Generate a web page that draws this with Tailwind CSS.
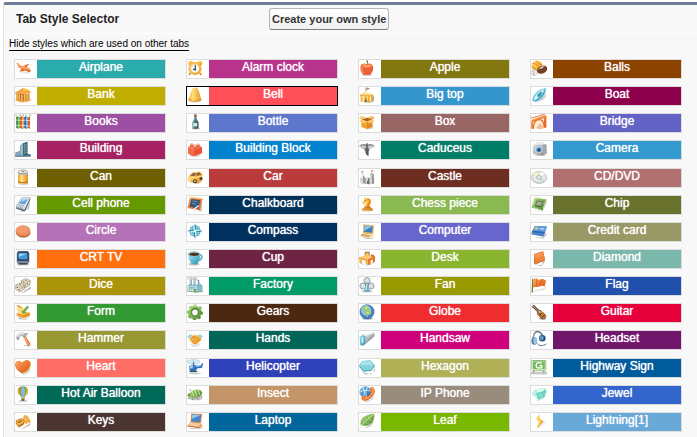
<!DOCTYPE html>
<html lang="en">
<head>
<meta charset="utf-8">
<title>Tab Style Selector</title>
<script src="https://cdn.jsdelivr.net/npm/@tailwindcss/browser@4"></script>
</head>
<body class="bg-white font-['Liberation_Sans',Arial,sans-serif] text-xs text-black">
<svg width="0" height="0" class="absolute" aria-hidden="true">
  <defs>
    <linearGradient id="o" x1="0" y1="0" x2="1" y2="1"><stop offset="0" stop-color="#fbb070"/><stop offset=".5" stop-color="#ee7c36"/><stop offset="1" stop-color="#d85a14"/></linearGradient>
    <linearGradient id="y" x1="0" y1="0" x2="1" y2="1"><stop offset="0" stop-color="#ffe08a"/><stop offset=".5" stop-color="#fbba42"/><stop offset="1" stop-color="#e8911c"/></linearGradient>
    <linearGradient id="b" x1="0" y1="0" x2="1" y2="1"><stop offset="0" stop-color="#9cd0f0"/><stop offset=".5" stop-color="#4a94d0"/><stop offset="1" stop-color="#205c9c"/></linearGradient>
    <linearGradient id="c" x1="0" y1="0" x2="1" y2="1"><stop offset="0" stop-color="#b8eaf4"/><stop offset=".5" stop-color="#5cbcd6"/><stop offset="1" stop-color="#2c88a8"/></linearGradient>
    <linearGradient id="g" x1="0" y1="0" x2="1" y2="1"><stop offset="0" stop-color="#b8de84"/><stop offset=".5" stop-color="#78b04c"/><stop offset="1" stop-color="#48802c"/></linearGradient>
    <linearGradient id="s" x1="0" y1="0" x2="1" y2="1"><stop offset="0" stop-color="#f4f4f4"/><stop offset=".5" stop-color="#bcbcbc"/><stop offset="1" stop-color="#787878"/></linearGradient>
    <linearGradient id="m" x1="0" y1="0" x2="1" y2="0"><stop offset="0" stop-color="#f0a024"/><stop offset=".35" stop-color="#ffe07c"/><stop offset="1" stop-color="#e48c1c"/></linearGradient>
  </defs>
</svg>

<main class="mt-[2px] ml-[3px] rounded-tl-[3px] border-t-3 border-l border-t-[#6f7d9a] border-l-[#e4e4e4] bg-[#f8f8f8] pb-[5px]">
  <header class="flex h-[29px] items-center border-b border-white pl-3">
    <h1 class="w-[253px] font-bold text-[#222]">Tab Style Selector</h1>
    <button type="button" class="h-[22px] rounded-[3px] border border-[#b5b5b5] border-b-[#7f7f7f] bg-linear-to-b from-white to-[#f0f0f0] px-[2px] text-[11px] leading-4 font-bold text-[#333]">Create your own style</button>
  </header>
  <div class="flex h-[25px] items-start pt-1 pl-[5px]">
    <a href="#styles" class="border-b border-black text-[10px] leading-3">Hide styles which are used on other tabs</a>
  </div>
  <ul id="styles" class="grid min-h-[373px] grid-cols-4 content-between gap-x-5 pr-[15px] pl-[10px]"></ul>
</main>

<script>
const shadow = '<ellipse cx="8" cy="14.3" rx="6" ry="1.3" fill="#000" opacity=".18"/>';
const styles = [
['Airplane','#2aacac','<path d="M4 12l10 1.6 1-1.4z" fill="#000" opacity=".15"/><path d="M1.2 2.8l2.2.1 2.2 2.5 2.8.6L12 4.2l2.4-.3-2.8 3.4 3.3 1.5 1 2.4-2 1-3.5-1.7-3.5 1-2.7-.3 2.2-2.4-3-1.6z" fill="url(#o)"/><path d="M3 4l3.7 3 5 1.6 3 1.6" stroke="#ffd09a" fill="none"/>'],
['Alarm clock','#b8338c','<circle cx="3.5" cy="3.2" r="2.5" fill="url(#y)"/><circle cx="12.7" cy="3.2" r="2.5" fill="url(#y)"/><path d="M3.5 13l-1.4 2M12.5 13l2 1.8" stroke="#dd951d" stroke-width="1.8"/><circle cx="8" cy="8.5" r="6.2" fill="url(#y)" stroke="#e6a636" stroke-width=".6"/><circle cx="8" cy="8.5" r="4.4" fill="#fff9ec" stroke="#d9b779" stroke-width=".6"/><path d="M8.3 5v3.7L6 9.2l2.6 1.2z" fill="#23415f" stroke="#23415f" stroke-width=".7"/>'],
['Apple','#82780f','<ellipse cx="8" cy="14.8" rx="5" ry="1" opacity=".25"/><path d="M7.7 4.1C6 3 2.2 3 1.4 7c-.6 3.8 2.2 8 4.4 8 1.5 0 2-.4 3.2 0 2.6.4 5.4-3 5.2-7.4C14 3.4 10 2.8 7.7 4.1z" fill="#ed6034"/><path d="M3 5.4c2-1.6 4-1 5-.4 2-1 4-.4 5 1-2 2-8 2-10-.6z" fill="#fba26a"/><path d="M2.8 7c-.3 2 .5 4.4 1.8 6" stroke="#ffb184" fill="none"/><path d="M8 5c.3-2-.1-3-.9-4.6l1.4-.2C9.2 2 9 3.8 8 5z" fill="#527524"/>'],
['Balls','#8c4300','<circle cx="6" cy="6" r="5.5" fill="url(#y)"/><path d="M1.5 3.5c4 0 7 2.5 7 7M5 .8c1 2 3 3.6 6.4 4M.8 7c2 0 3.4 1.5 4 4" stroke="#d8741a" stroke-width=".8" fill="none"/><ellipse cx="11" cy="9.7" rx="5.6" ry="3.7" transform="rotate(-22 11 9.7)" fill="#714324"/><path d="M6.5 10c1.8-2.7 5-4.4 8-4" stroke="#bf926b" fill="none"/><path d="M9 8.5l3.5-1.5" stroke="#fff"/><circle cx="3.3" cy="12.7" r="3" fill="#efefef" stroke="#b8aaa6" stroke-width=".5"/><path d="M2 10.5c1.2 1 1.5 3 .4 4.5" stroke="#cc6052" stroke-width=".6" fill="none"/>'],

['Bank','#bfae00','<path d="M2 14.6l11 .6 2.5-2.5z" opacity=".2"/><path d="M.3 5.4L8.8.7l6.6 3.3-.2 2-8.3 1.6L.4 7z" fill="url(#y)"/><path d="M8.8.7L7 7.6.4 7l-.1-1.6z" fill="#f5a050"/><path d="M1.2 7h13v5.4L7 14.6 1.2 12.5z" fill="#b7692a"/><path d="M2 7v5.6M4.2 7.2v6M6.8 7.4v6.8M9.6 7v6.4M12 6.6v6M14.3 6.2v6" stroke="#fbc360" stroke-width="1.5"/><path d="M.6 12.1L7 14l8.6-2v1.6L7 15.6.6 13.6z" fill="#f3a53c"/>'],
['Bell','#ff505a',shadow+'<path d="M6.8.8c2.2-1 4 .1 4.9 3l1.8 6.5c.4 1.4 1.2 1.6 1 2.5-.5 2-12.6 2.2-13.2 0-.3-1 1-1.5 1.4-3l1.8-6c.5-1.7 1.2-2.5 2.3-3z" fill="url(#m)"/><path d="M1.3 12.4c2 1.5 10 1.7 13.1.2-.4 2.3-12.4 2.5-13.1-.2z" fill="#d6841a"/><path d="M2.7 9.9c3 1.2 7 1.3 10.7.1" stroke="#ffdb76" stroke-width=".6" fill="none"/>'],
['Big top','#3396cc','<path d="M7 .5V5" stroke="#8a8069" stroke-width=".8"/><path d="M7.4.6l4 .8-4 1.5z" fill="#a88976"/><path d="M1.2 8L6.8 4.3 14 8l.6 6-6 1.6-7.2-1z" fill="url(#y)"/><path d="M7 4.3L4.8 8l-.6 7M7.1 4.3L8 8v7.5M7.3 4.3l4 4 .4 6.4" stroke="#fff5c7" stroke-width="1.1" fill="none"/><path d="M.8 7.8c2 1 3 .5 4 .4 2 1.2 3 .5 4 .4 2 .8 3.8.4 5.6-.4" stroke="#dda43a" fill="none"/><path d="M7 10l-1.6 5.2h3z" fill="#8e754d"/><path d="M14.5 9v5l-5 1.6" stroke="#aaa" fill="none"/>'],
['Boat','#8c004c','<path d="M2 14.6c6 0 10-3 13-9l-.6 5c-3 3.6-7 5-12.4 4z" fill="#8e9aa0" opacity=".5"/><path d="M1.2 13.6C1.4 9.3 4.6 3 14.8 1c.6 5-3.4 11.6-11 13.8z" fill="url(#c)"/><path d="M2.8 12.8c1-4.5 5-8.6 10.8-10.8-1.6 4.2-5 8.4-9.6 11z" fill="#e5f7fa"/><path d="M6.4 7.7L10 4.5l1.2.7-2.2 4.2-3 .4z" fill="#2f97b1"/>'],

['Books','#9c4fa3','<path d="M1.1 3.1l2.2-.6V15l-2.2-1.5z" fill="#418a3a"/><path d="M3.3 2.5L5 3.1v11L3.3 15z" fill="#70b457"/><path d="M5 2.8l2.5-.7V15L5 14z" fill="#d45e27"/><path d="M7.5 2.1l1.6.8v11.3l-1.6.8z" fill="#f5a35a"/><path d="M9.2 3l2.2-.8V15l-2.2-1z" fill="#2165a3"/><path d="M11.4 2.2L13 3v11l-1.6 1z" fill="#6fb1dd"/><path d="M13 3.3l2-.6V15l-2-1z" fill="#df5828"/><path d="M1 .7l.2 2M5 0v2M8 0v2M10.9.3v2M15 0v3" stroke="#86b76d"/><path d="M1 6l3.7.3M5 6.2l4 .4M9.3 6.2l5.7.4M1 11l4 1M5.4 11.2l9.4 1" stroke="#fff" opacity=".65"/>'],
['Bottle','#5c77cb','<path d="M5 14.8l7 .2 1-1" stroke="#000" opacity=".25"/><path d="M7.1.7h2.4v4.1l2 3.1v6.4c-1.4 1-4.5 1-6 0V7.9l1.7-3z" fill="#456f73"/><path d="M7 .5h2.6v1.8H7z" fill="#d7552b"/><path d="M6.1 9h4.8v3.4H6.1z" fill="#d7e6e8"/><path d="M7.7 2.8v2.7L6.3 8v6" stroke="#a3c7c6" stroke-width=".8" fill="none"/><path d="M10.8 8v6" stroke="#1e3941" stroke-width=".8"/>'],
['Box','#996666','<path d="M3 13l4.5 2.2 6-2.2 1.5 1-7 1.7z" opacity=".2"/><path d="M2.4 6L8 7.4V15l-5.6-2z" fill="#f2a02c"/><path d="M8 7.4L13.5 6v7L8 15z" fill="#e08924"/><path d="M2.4 5.4L8.2 3.7l5.3 1.6L8 7.4z" fill="#a8651f"/><path d="M.3 4l2-1.8L8 3.8l-5.6 1.8z" fill="#fcc55e"/><path d="M8 3.8l5.4-1.7L15.6 4l-2.1 1.4z" fill="#f7b04a"/><path d="M2.4 5.5L8 7.4 6.4 9.8.3 7.5zM8 7.4l5.6-2 2.1 2-6 2.2z" fill="#ffc764"/>'],
['Bridge','#6363c6','<path d="M0 6l14-5 1.6 1L1.8 8z" fill="#f89845"/><path d="M0 4.2L13.8.2M.7 8L15.5 2.8" stroke="#dc581b" stroke-width=".8"/><path d="M.2 7.3l2-.6v8.6l-2-1zM12.7 3l2.7-1v11.2l-2.7 1z" fill="url(#o)"/><path d="M2.6 14.5C3.6 6 10.3 3 13 10v4l-3 1z" fill="#fff0dd"/><path d="M2 15C2.4 9 5 5.6 8.3 5.6c3.4 0 4.7 3.3 4.8 7.5" fill="none" stroke="#ed742d" stroke-width="1.4"/><path d="M5 14l4-5 4 5-4 1.5z" fill="#f8bd90"/>'],

['Building','#a62263','<path d="M.5 15.2v-3.6L5 10V5l2.5-2.6 5-1.6v12l3.3.4v1.9z" fill="#517e98"/><path d="M5.2 5L8 2.4v12.8H5.2z" fill="#8bb9ce"/><path d="M8 2.4l4.3-1.3v14H8z" fill="#386683"/><path d="M6.5 5v8M9.4 3.6V13M11 3v10" stroke="#d8d68e" stroke-width=".8" stroke-dasharray="1 1"/><path d="M.5 11.8l4.4-1.3v4.7H.5z" fill="#82aabe"/><path d="M0 15.2h15.8" stroke="#507386"/>'],
['Building Block','#0082cc',shadow+'<path d="M1 6.3l6-2.5L15 6v6.3l-8.2 3L1 12.4z" fill="#e95234"/><path d="M1 6.3l6 2v7l-6-2.8z" fill="#f26a49"/><path d="M1 6.2l6.2-2.6L15 6 6.9 8.4z" fill="#ff9a7c"/><path d="M3 3.2h3.3v3H3zM9.4 3.5h3.3v3H9.4zM6.3 4.7h3v3h-3z" fill="#e25a3e"/><ellipse cx="4.6" cy="3.3" rx="1.7" ry="1" fill="#ffac93"/><ellipse cx="11" cy="3.6" rx="1.7" ry="1" fill="#ffac93"/><ellipse cx="7.8" cy="4.9" rx="1.7" ry="1" fill="#ffbca7"/>'],
['Caduceus','#007d66','<path d="M0 5c2-2.5 5-2.8 8-.8C11 2 14 3 16 5c-2.4.7-3 2.6-5.8 2.8L9.6 15l-1.2-.1-1.7-3L5 8C2.4 7.8 2 6 0 5z" fill="#929292"/><path d="M1.5 5l5.6 1M3 6.6l4 .5M14.5 4.8L9 6M13.3 6.2L9 7.3" stroke="#ececec" stroke-width=".8"/><path d="M8 3v11" stroke="#4d4d4d" stroke-width="1.1"/><path d="M5.6 8c5 .2 5 2 2 2.7-2 1 2 1 1.6 2.6M10.5 8c-5 .3-4 2-1.6 3-2 .5-2 1.3-.5 2.5" stroke="#555" stroke-width=".9" fill="none"/><circle cx="8" cy="3.5" r="1.2" fill="#737373"/>'],
['Camera','#3399cf','<path d="M3 14l11-.2 1.6-2-2 3H5z" opacity=".25"/><path d="M1.6 4.3l2.2-1 1.7-1.7 5.6-.1L13 3.2l2.5.5v8.9l-3.6 2L2 13z" fill="url(#s)"/><path d="M12.4 3.5l3-.1v8.9L12 14z" fill="#a3a8ac"/><path d="M5.6 2h5l.7 1.8h-6z" fill="#f1f1f1"/><circle cx="7.7" cy="8.6" r="4.2" fill="#e6e9ed" stroke="#888f97" stroke-width=".6"/><circle cx="7.7" cy="8.6" r="2.8" fill="url(#b)"/><circle cx="7.7" cy="8.8" r="1.2" fill="#1b3c65"/>'],

['Can','#6e6000','<ellipse cx="8.4" cy="14.7" rx="5" ry="1.1" opacity=".25"/><path d="M3 3.2c2 .8 7.8.8 10 0v10.5c-2 1.9-8 1.9-10 0z" fill="url(#m)"/><path d="M3 3h10v2.4c-2.5 1-7.5 1-10 0z" fill="#bababa"/><ellipse cx="8" cy="2.8" rx="4.8" ry="1.9" fill="#efefef" stroke="#8e8e8e" stroke-width=".7"/><path d="M6.5 2.7h3" stroke="#777"/><path d="M3 12.7c2 1.4 8 1.4 10 0" stroke="#a96d24" fill="none"/>'],
['Car','#b93b3b','<path d="M2 13.6l8 1.5 5-2z" opacity=".25"/><path d="M.6 9.2L2.3 6l3.2-2.8 7.6-.8 2.3 2.7-.2 6.6-5 2.8L.8 12z" fill="url(#y)"/><path d="M3.2 6.7l2.8-2.6 3-.2-1.4 3zM8.6 6.8L10 3.8l2.4-.2L14.3 6z" fill="#826142"/><path d="M1 8.8l7.2-.2L14.8 7" stroke="#ffe49b" fill="none"/><circle cx="8" cy="12.2" r="2" fill="#48423e"/><circle cx="8" cy="12.2" r=".9" fill="#d7d0c9"/><circle cx="14" cy="9.6" r="1.5" fill="#49413b"/><path d="M1 10h2.8v1.5L1 11z" fill="#fff8cd"/>'],
['Castle','#6e2d21','<path d="M2 5.3h3.2v9H2zM6.8 8.4h3v6h-3zM11 4.5h3.4V15H11z" fill="url(#s)"/><path d="M1.2 9h14v5L10 15.6 1.6 14z" fill="#b3b3b3"/><path d="M3 6v8M8 9v5M12 6v9" stroke="#fafafa"/><path d="M5 7v7M14 5v9.5M9.7 9v6" stroke="#666" stroke-width=".8"/><path d="M3 2v3M12.7 1.6v3" stroke="#9c7870" stroke-width=".6"/><path d="M3 1.7l2 .9-2 .7zM12.6.7l2.3 1-2.3.7z" fill="#ee6d52"/><path d="M8 12c1.3-1 2.2 0 2 3l-2-.5z" fill="#6b6b6b"/>'],
['CD/DVD','#b07070','<ellipse cx="8.3" cy="9.6" rx="7.4" ry="5.2" opacity=".2"/><ellipse cx="8" cy="8.3" rx="7.5" ry="5.8" fill="#e8e9e6" stroke="#adb0ac" stroke-width=".7"/><path d="M8 8.3L2.3 4.7l3-1.7z" fill="#fff7a8"/><path d="M8 8.3l2.4 5.3 3.2-1.8z" fill="#bcdfe4"/><path d="M8 8.3L10.5 3l3 1.6z" fill="#fff"/><ellipse cx="8" cy="8.3" rx="2.5" ry="1.9" fill="#d2d7d2" stroke="#979e97" stroke-width=".5"/><ellipse cx="8" cy="8.3" rx="1" ry=".8" fill="#fff"/>'],

['Cell phone','#669900','<path d="M5 15.4l7-3 3-8-1 8-6 3z" opacity=".3"/><path d="M6.7 1.4l8.5.2.2 1.6-5 11.2-1.2 1L1 12.6v-2z" fill="#536575"/><path d="M6.7 1.4l8.4.4L9.4 13.8 1 11.2z" fill="#dce3e9"/><path d="M7.4 2.9l5.5.3-3.2 5-5.7-.7z" fill="#5ba2dd"/><path d="M7.4 2.9l5 .3-6 3z" fill="#abd6f7"/><path d="M3.8 8.8l5.2 1M3 10.4l5 1.3M2.5 11.5l5.5 1.3" stroke="#7f8e9b" stroke-width=".8" stroke-dasharray="1.5 .5"/>'],
['Chalkboard','#003158','<path d="M3 14.6l9 .7 3-12-.3 12z" opacity=".25"/><path d="M2.7 1.2l12.8 1.5-2.8 11.6L.4 12z" fill="url(#o)"/><path d="M2.7 1.2l12.8 1.5" stroke="#ffd086"/><path d="M4.2 3l9 .9-2 8.6-8.7-1.7z" fill="#36577b"/><path d="M5.5 5l5 .7M5 7.4l4 .5" stroke="#8dacc7" stroke-width=".7"/><path d="M5 14l6.3-5 .8 1-6 5z" fill="#f1f3f5"/>'],
['Chess piece','#8ab851',shadow+'<path d="M3.2 13.2l2-1.7c.2-3 3-3.8 2.8-5.3L4.6 8.6 2.9 7.3 5 3.8 5.1.7l2 1.5c4-.8 6.5 2.6 4.4 5.7-1.1 1.7-.3 3 .6 3.8l1.7 1.5v1.6H3.2z" fill="url(#y)"/><path d="M8 2.7c3 .2 3.5 3 1.8 5.1-1 1.2-1.2 3-.3 4" stroke="#d47b17" stroke-width="1.1" fill="none"/><path d="M3.3 13h10.4M5.4 11.4h6.2" stroke="#bd6b18" stroke-width=".8"/><circle cx="6.2" cy="4.3" r=".6" fill="#824513"/>'],
['Chip','#69722d','<path d="M2 13.8l9.8 1.7L16 4v2l-3.6 9z" opacity=".25"/><path d="M3.7 1.5l11.8 2-4 11L.5 11.6z" fill="url(#g)"/><path d="M4 2.4l1.6-.3M2 7.5l1-.3M1.4 9.7l1-.3M3 5l1-.2M7 1.5l-.2 1M10 2l-.2 1M13 2.5l-.2 1M3 12.3l.3-1M6 13l.3-1M9 14l.2-1M14.5 6l-1-.2M13.6 8.4l-1-.2M12.8 11l-1-.2" stroke="#d6f2af"/><path d="M5.8 4.6l6.4 1-2 5.7-6.2-1z" fill="#5e6a5a"/><path d="M6.3 5.4l4.8.7-1.3 3.6-4.8-.7z" fill="#a5afa1"/>'],

['Circle','#b572b8','<ellipse cx="8.6" cy="10.2" rx="7" ry="4.8" opacity=".28"/><ellipse cx="8" cy="9" rx="7.3" ry="5.2" fill="#c75f27"/><ellipse cx="8" cy="7.6" rx="7.3" ry="5.4" fill="#ef8f5b"/><ellipse cx="7.4" cy="6.5" rx="5.8" ry="3.8" fill="#f4a074" opacity=".7"/>'],
['Compass','#00315e','<circle cx="8" cy="8" r="5.1" fill="#c8e7ef" stroke="#5ca8bd" stroke-width="1.1"/><path d="M8 0l1.6 6.4L16 8 9.6 9.6 8 16 6.4 9.6 0 8l6.4-1.6z" fill="#1f8099"/><path d="M3 3l5 3 5-3-3 5 3 5-5-3-5 3 3-5z" fill="#5eb8ce"/><path d="M8 0v8L6.4 6.4zM16 8H8l1.6-1.6zM8 16V8l1.6 1.6zM0 8h8L6.4 9.6z" fill="#bee8ef"/><circle cx="8" cy="8" r="1.1" fill="#fff"/>'],
['Computer','#6666cc','<path d="M3 14l9 1.3 3-2-2 2.6H7z" opacity=".25"/><path d="M4.3 1.3L15 2.2l-.7 9.5-10.4-1.2z" fill="#e8b76a"/><path d="M5.4 2.5l8.3.7-.6 6.6-8-.9z" fill="#3d7fbd"/><path d="M5.4 2.5l8.3.7L5.2 8z" fill="#89bee7"/><path d="M3 10.3l9.6 1.4 1.7 1.6-4.8 1.8L.7 13z" fill="#f3d59c"/><path d="M3 11.5l8 1.2M2.2 12.4l8 1.4" stroke="#b8752f" stroke-width=".7" stroke-dasharray="1.5 .6"/>'],
['Credit card','#999966','<path d="M2 13.5l9.4 1.3 4-5v2l-3.4 4z" opacity=".3"/><path d="M3.8 3l12 .4-.3 1.4-2.5 7.8-1 .8L.3 11.2z" fill="#3d73b8"/><path d="M3.8 3l12 .5-3.2 8.6L.5 10z" fill="#5d9ee0"/><path d="M1.5 7.4l12.7 1.5L13 11 .8 9.3z" fill="#2e68af"/><path d="M4.5 4.3l2.8.2-1 2-2.7-.3z" fill="#f8ce60"/><path d="M9 5.7l4.3.3" stroke="#dbefff"/>'],

['CRT TV','#ff6f0d','<path d="M2 14.8h12" stroke="#000" opacity=".3"/><path d="M3.2.9h9.7l1.4 2.6v8L12.8 14H3L1.8 11.5v-8z" fill="#526478"/><path d="M2.6 2.2h11v8.6h-11z" fill="#2e4257"/><path d="M3.7 3.4h8.7v5.9H3.7z" fill="#3f9bde"/><path d="M3.7 3.4h8.7L3.7 7z" fill="#93d3fa"/><path d="M3 12h10" stroke="#a6b1bb"/><path d="M4 14h8" stroke="#27323e"/>'],
['Cup','#6f2343','<ellipse cx="7" cy="14" rx="5.5" ry="1.6" opacity=".25"/><path d="M12 5c4-1 3.9 4.8-1 5.5" fill="none" stroke="#5ab9d0" stroke-width="1.8"/><path d="M1 4.2h12c.1 4.6-1.4 10-5.1 10.4C3.8 15 1.5 10 1 4.2z" fill="url(#c)"/><ellipse cx="7" cy="4" rx="6.1" ry="2.5" fill="#d4f1f7" stroke="#64b1c7" stroke-width=".6"/><ellipse cx="7.2" cy="4.2" rx="5" ry="1.7" fill="#51321f"/>'],
['Desk','#8ab52e','<path d="M1 12.5l6 3 8-3-7 3.5-7-2.6z" opacity=".25"/><path d="M6.2 2.2h4v4.2h-4z" fill="#f5c15c" stroke="#7b5632" stroke-width=".8"/><path d="M0 7.2L6.5 5 16 6l-7 2.8z" fill="#ffca68"/><path d="M0 7.3l9 1.6v2L0 9z" fill="#f2a13b"/><path d="M9 8.9L16 6v5.8l-2.4 1.4V9.6l-2 .8v4L9 15z" fill="#dc7c26"/><path d="M.4 9L3 9.5v4.3L.4 12.5zM6.5 10L9 10.6V15l-2.5-1.1z" fill="#f6b347"/><path d="M12 4.5l3 .5v2l-3-.6z" fill="#d26a2b"/>'],
['Diamond','#7ab8ac','<path d="M3 14.5l7.5.5L14 8l-.5 4-3 4z" opacity=".3"/><path d="M3.2 4l8.9-2.8L14 9.8l-1 1.3-9 3.5-1.1-2z" fill="#c96125"/><path d="M3.2 4l8.9-2.8 1.9 8.7-10.2 3.6z" fill="#ed833c"/><path d="M3.5 4.3l8-2.4.8 3.8-8 3.4z" fill="#f3954e"/>'],

['Dice','#aa940a','<path d="M2 13.6l5 2 9-6v2l-7 4z" opacity=".3"/><path d="M6.5 3.8l4.3-2.2 4.4 2-.4 4.6-4.4 2.4-3.8-2z" fill="#eee6d1" stroke="#978870" stroke-width=".7"/><path d="M6.5 3.8l4.3 2 4.3-2.1M10.6 6v4.6" stroke="#a99d80" stroke-width=".7" fill="none"/><path d="M.8 8l4-2 5 1.8-.5 4.4-4.6 2.4-4-2.3z" fill="#f1ead8" stroke="#978870" stroke-width=".7"/><path d="M.8 8.1l4.1 2 4.8-2.2M4.8 10.3v4.2" stroke="#a99d80" stroke-width=".7" fill="none"/><g fill="#5f5343"><circle cx="2.3" cy="10.4" r=".7"/><circle cx="3.6" cy="12.5" r=".6"/><circle cx="7" cy="11" r=".7"/><circle cx="8.3" cy="9.8" r=".5"/><circle cx="5" cy="7.8" r=".7"/><circle cx="11" cy="3.6" r=".7"/><circle cx="12.6" cy="7" r=".8"/><circle cx="8.6" cy="5.5" r=".5"/></g>'],
['Factory','#009b66','<path d="M1 2c1-2 4-1 4 0 3-2 5-1 5 1" fill="none" stroke="#d0d3d4" stroke-width="2"/><path d="M2.8 2.5h2V10h-2zM6.5 2h2v8h-2zM10 3h2.3v8H10z" fill="#819da8"/><path d="M3 3v7M7 2.5V10M10.5 3.5v7" stroke="#ddebef"/><path d="M.5 8.5L4.4 6v2.4L8.4 6v2.5L12.4 6l3.1 2.4v6l-6 .8-9-1.2z" fill="#83b8c6"/><path d="M.5 9h9v6l-9-1z" fill="#cce4e9"/><path d="M2 10.3h6M2 12h6" stroke="#5596aa" stroke-dasharray="1.4 .7"/><path d="M0 14l9.4 1.2 6.4-.8" stroke="#85aa82" fill="none"/><path d="M7 12h2v3H7z" fill="#61a64f"/>'],
['Fan','#999900',shadow+'<circle cx="8" cy="3.7" r="3.1" fill="#dce1e6" stroke="#8a98a3" stroke-width=".9"/><circle cx="4" cy="9" r="3.1" fill="#d9dfe5" stroke="#8a98a3" stroke-width=".9"/><circle cx="12" cy="9" r="3.1" fill="#d9dfe5" stroke="#8a98a3" stroke-width=".9"/><circle cx="8" cy="7.5" r="2" fill="#67808f"/><path d="M7 8h2l.6 4 2.2 2.1c-1 1.2-6.3 1.2-7.6 0l2.2-2z" fill="#68aac1"/><path d="M7.5 8v5" stroke="#d1eff6"/><circle cx="8" cy="7.2" r=".8" fill="#eef7fa"/>'],
['Flag','#204fac','<path d="M1.7 2.2l-.4 12.9" stroke="#66833b" stroke-width="1.3" stroke-linecap="round"/><path d="M3 14l9-1.5 3-2" stroke="#000" opacity=".13"/><path d="M2 2.2c3-2.8 4.5 1.7 7.3.3 2.2-1 3.4-.5 5.8 1.2l-1.5 6.1c-2.6-1.7-4-1-5.5-.2-2 1.3-3.7-.5-6.2 1z" fill="url(#o)"/><path d="M6 1.6l-.8 7.4M10.4 2.3L9.2 9" stroke="#c94d1c" opacity=".6"/>'],

['Form','#339933','<path d="M3 12.8l6 2.6 6-3-5 3.6-6-1z" opacity=".3"/><path d="M1.7 9.3L9 7l5.8 1.7v3.2L8.6 14.6l-7-2.8z" fill="url(#y)"/><path d="M1.7 9.4l7 2.3 6-2.8M1.7 10.8l7 2.4 6-2.8" stroke="#c7721c" stroke-width=".6" fill="none"/><path d="M1.6 4.6L6 3l6 2-4.8 5.6L3.7 9z" fill="#fddb83"/><path d="M7.3 9.8L6.6 6l1.5.8L12 1.7l2 1.2-4 5.2 1.5.8z" fill="#72ac4c"/><path d="M2 1.5l4.5 2.3" stroke="#d6a02b" stroke-width="1.6"/>'],
['Gears','#4c2811',shadow+'<path d="M6.6.6h2.8l.4 2 1.5.7L13 2.1l2 2-1.2 1.7.6 1.5 1.5.4v2.7l-2 .4-.6 1.5.9 1.2-2 1.7-1.6-1-1.3.4-.5 1.4H6l-.4-1.8-1.4-.6-1.7 1-1.8-2 1-1.5-.5-1.4-1.2-.5V6.7l1.8-.4.7-1.5-1-1.6 2-1.8 1.5 1.2 1.3-.5z" fill="url(#g)"/><circle cx="8" cy="8" r="3.9" fill="#4f813a"/><circle cx="8" cy="8.4" r="2.8" fill="#fff"/><path d="M2.4 5.7L4 3.7M6.7 1.7h2.2M12.4 3.4l1.2 1.4" stroke="#d3edb7"/>'],
['Globe','#ef2c30','<ellipse cx="8.5" cy="14.5" rx="5.5" ry="1.2" opacity=".3"/><circle cx="8" cy="7.8" r="7" fill="#4382ca" stroke="#2c5b9c" stroke-width=".7"/><circle cx="7" cy="6.2" r="5.2" fill="#8cc1ef"/><path d="M2.3 5.2l4-3.6 4 1.1-1 2.2 3.1 1.4-.4 4-3 .7-.5 2.3-3-4.1.7-2.2z" fill="#a0cb75"/><path d="M6 2.6l3 .5-2 2.5zM7 8.5l3.3-.3-1 2z" fill="#d4ed9f"/>'],
['Guitar','#e6003c','<path d="M8 14l5 .8 2.6-3-1 4-6-.4z" opacity=".3"/><path d="M1 2.7l2-1.6 7 6.8-1.8 1.9z" fill="#534137"/><path d="M.6 2.6L2.8.6l1.5 1.6L2 4.1z" fill="#8d6b4e"/><path d="M6.7 7.6c2-3.5 4.7.7 6 1.7 2.8 2 2.4 4.4.7 5.3-2 1-3.7 0-4.7-1.9-1.4-1.5-3.3-2.3-2-5.1z" fill="#bd762a" stroke="#58391f" stroke-width=".6"/><path d="M7.8 8c1-1.3 2.2.2 3 1.3" stroke="#efba69" fill="none"/><circle cx="9.7" cy="10.1" r="1.2" fill="#342219"/><path d="M2 2l10.3 10.2" stroke="#ebe1be" stroke-width=".6"/><path d="M11 13.4l2-2" stroke="#322"/>'],

['Hammer','#999933','<path d="M9 14.5l5 .7 1.7-1.1" stroke="#000" opacity=".2"/><path d="M8 5.4l2-1.6 5.6 9.4-2.8 1.7z" fill="url(#o)"/><path d="M9.2 5.8l4.7 8" stroke="#ffc391"/><path d="M1 6.5l1.4-3.8L5.6.9l3.2.4L11 3.8l.3 1.8L9 7 6.7 4.8 5 5.9l-.6 2.4-1.8 1z" fill="url(#s)"/><path d="M1 6.5l1.6-.6 1.6 2.4-1.7 1zM9.2 2l4.5.4-2.5 2" fill="#a0a6aa"/><path d="M3.2 4l2.6-2 3 .6" stroke="#fff" fill="none"/>'],
['Hands','#00665a','<path d="M3 12.6l6 2.4 5-3.5-3.4 4H6z" opacity=".2"/><path d="M.2 5.2L3.7 3l2.4 2-3.4 4zM15.8 5.2L12.6 3l-2.4 2 3.2 4z" fill="#a6d1dc"/><path d="M2.5 7.4L6 4.2l3-.7 3.8 2.2 1.5 3-4.8 4.7-2.7-.1-4-3.4z" fill="url(#y)"/><path d="M3.8 7.8l3-2.4 3 1.3 3.4 3M6 5.7l4.8 5M4.3 8l4 4.5" stroke="#ca6f1d" stroke-width=".8" fill="none"/><path d="M5 10.5l1.2-1.7 1.2.8 1 1.4.8 1.5-1.7 1z" fill="#ee974a"/>'],
['Handsaw','#cf007c','<path d="M4 13l11-8.4.6 1L5 14.4z" opacity=".25"/><path d="M4 4.3L15 .9l.6 3.3-9.6 8z" fill="url(#s)"/><path d="M4.7 5l10-3.3" stroke="#fff"/><path d="M15.4 4.3L6.2 12" stroke="#7c7c7c" stroke-dasharray=".9 .6"/><path d="M.5 5.5l3.7-2 2.4 1.9-.5 7.6-3 2-2-1.3z" fill="url(#c)"/><path d="M2.6 6.7l1.8-.5-.2 5.4-1.3.8z" fill="#e2f7fb"/>'],
['Headset','#70166b','<path d="M2.3 8C1.8 1.8 6-1 9.3 1.6c2.3 1.7 2.4 4 2 6" fill="none" stroke="#62707f" stroke-width="1.6"/><path d="M2.4 7.2C2.3 3 5.4.5 8.5 2" fill="none" stroke="#c7d1db" stroke-width=".7"/><ellipse cx="3.3" cy="10" rx="2.8" ry="3.8" fill="#41729f"/><ellipse cx="4.2" cy="9.8" rx="2.1" ry="3.4" fill="#9fc2de"/><circle cx="11.3" cy="7.2" r="3.3" fill="#244e7d"/><circle cx="10.6" cy="7" r="2.2" fill="#6695bf"/><path d="M6 12.5c2 2.7 5.8 2.7 9.4.4" fill="none" stroke="#61768b" stroke-width="1"/>'],

['Heart','#ff6e66','<path d="M3 11l6 4 6.4-6-1 4-5.5 3z" opacity=".18"/><path d="M7.2 4.1C9.6.1 15.2.2 15.7 5c.2 4-3.6 8-7.8 9.6C3.4 12.6-.1 9 .4 5 .9 1.7 4.8.7 7.2 4.1z" fill="#ca671c"/><path d="M7.2 4C9.6.1 14.6.2 15 4.4c.3 3.8-3 7.6-7.1 9.2C3.4 12-.1 8.5.4 5 .9 1.7 4.8.7 7.2 4z" fill="url(#o)"/><path d="M15.3 6c0 3.5-3.4 6.7-7.4 8.2" stroke="#f2c25e" fill="none"/>'],
['Helicopter','#2e41b8','<ellipse cx="8" cy="14.4" rx="6" ry="1" opacity=".2"/><ellipse cx="6.6" cy="2.8" rx="6.3" ry="2.1" fill="#d8f0f5" stroke="#9ccad6" stroke-width=".7"/><path d="M6.5 2.5v4" stroke="#5a7b9b" stroke-width="1.2"/><path d="M2 7.3c2.1-2.2 6-2 8.2-.5l3.4-.2L15.2 4l.8.3-.8 4.5-5 .8c-1.2 3.8-6 4.2-7.7 1.5z" fill="#2f71b9"/><path d="M2.5 8c.7-1.4 2-2 3.5-1.6l-.4 3H2.4z" fill="#9fd2f0"/><path d="M2.5 12.5h7.7" stroke="#34506c" stroke-width="1.2"/><path d="M7 7l3 .6 4-.4" stroke="#87bcec" stroke-width=".7" fill="none"/>'],
['Hexagon','#b0b057','<path d="M2 13l5 2.7 7-2 2-5v3l-4 3.6z" opacity=".28"/><path d="M.3 6.4L3.4 2l7.8-.4 4.5 4.5v1.6L12.2 12l-7.8.8L.4 8z" fill="#49a6b4"/><path d="M.3 6.4L3.4 2l7.8-.4 4.5 4.5-3.4 4.8-7.8.7z" fill="#87d3dc"/><path d="M1.7 6l2.4-3.3 6.5-.3 3.4 3.4z" fill="#a9e7ec"/>'],
['Highway Sign','#005b9c','<path d="M2.7 12v3M12.7 12v3" stroke="#858d83" stroke-width="1.4"/><rect x=".6" y="1" width="14.6" height="10.6" rx=".8" fill="#53973f"/><rect x="1.5" y="2" width="12.8" height="8.6" fill="#75b85b" stroke="#e6f6dc" stroke-width=".8"/><path d="M10.8 3.8H6.4c-1.8 1.2-1.8 4.2 0 5h4.4V6.6H8.4" fill="none" stroke="#fff" stroke-width="1.3"/><path d="M.5 13.3h15v1.6H.5z" fill="#e5e8e3" stroke="#848b80" stroke-width=".5"/>'],

['Hot Air Balloon','#006958','<ellipse cx="8" cy="15" rx="4.5" ry=".9" opacity=".2"/><path d="M8 .2C3 .2 1.7 5 4 8.3l2.8 3.2h2.4L12 8.3C14.2 5 13 .2 8 .2z" fill="#77a74b"/><path d="M6.1.6C4 2 3.7 7 6.9 11.5L3.8 8C1.6 4.8 3 1.3 6.1.6z" fill="#ef913e"/><path d="M8 .2c-2.4 2-2.4 7-.8 11.3h1.6c1.5-4 1.8-9-.8-11.3z" fill="#8abad8"/><path d="M11 1.2c2.6 2 2.3 5.2.8 7.3l-2.5 3C11 7.4 12.3 4 11 1.2z" fill="#f0b64c"/><path d="M6.8 11.5v2M9.2 11.5v2" stroke="#876d4b" stroke-width=".6"/><path d="M6.3 12.6h3.4l-.4 2.4H6.8z" fill="#845f36"/>'],
['Insect','#c49568','<ellipse cx="8.5" cy="12" rx="6.8" ry="2.3" opacity=".25"/><path d="M3 10.4L1 13M6.2 11.6L5.4 14M10 11.5l1.2 2M4 5L2.6 3.2M13 9.4l2.6 1" stroke="#678945" stroke-width=".8"/><ellipse cx="8.8" cy="7.7" rx="6.5" ry="4" transform="rotate(-12 8.8 7.7)" fill="url(#g)"/><ellipse cx="2.8" cy="9.3" rx="2.4" ry="2.3" fill="#9abc6a"/><path d="M5.2 5.7l2 5.6M8 4.2l2 6.8M11 3.9l2 5.3" stroke="#d1e6a5" fill="none"/><circle cx="2" cy="9.2" r=".7" fill="#455c32"/>'],
['IP Phone','#998c7d','<circle cx="6.2" cy="6" r="5.8" fill="url(#b)"/><path d="M1 6c3-2 7-2 10.5-1M3.6 1c2 3 2.4 6 1 10M9 1C7 3 6 8 8 11" stroke="#e6f4fc" stroke-width=".8" fill="none"/><path d="M4 15l7-.7 4-6-1 5-5 3z" opacity=".18"/><path d="M13 .7c3.5 1.8 3.7 5 1.4 8.3-2.5 3.7-6.5 6.6-10.2 5.7L2 12.6l1.3-3 3.8.4.4 1.2c2.2-1 3.6-2.4 4.6-4.6l-1.4-1.2.5-3.8z" fill="url(#o)"/><path d="M13 2c2.4 2.2 1 4.6-.6 6.7-2 2.5-4.6 3.8-7 4.1" stroke="#ffc18a" fill="none"/>'],
['Jewel','#3366cc','<path d="M3 12l4 2.6 7.5-7L13 12l-6 3.6z" opacity=".15"/><path d="M.6 7.4L5.2 3l9-.7 1.3 3.4-2 5.5-6 2.5z" fill="#7edbce"/><path d="M.6 7.4L5.2 3l.5 4.2 1.8 6.5z" fill="#b9f1e7"/><path d="M5.2 3l9-.7-3 3.7-5.5 1.2z" fill="#dcfbf4"/><path d="M5.7 7.2L11.3 6l4.2-.3M11.3 6l2 5M5.7 7.2l1.8 6.3" stroke="#4cb7aa" stroke-width=".6" fill="none"/>'],

['Keys','#4b3531','<path d="M3 14l4 1.6 9-6-1 3-7 3.2z" opacity=".22"/><path d="M7.2 4.2C9.6.7 13 2 13.7 4.4l2 3.8-1.2 1.6-2-.2-.8 1.6-1.3-.5-1-3z" fill="url(#y)"/><circle cx="10.6" cy="4.2" r="1.2" fill="#fff2d0" stroke="#aa661d" stroke-width=".6"/><path d="M.7 7.7l4-2.2 4 .2 1.3 2.7-1.2 3-4.5 3-1.6-1.1L1 11z" fill="#d18226"/><path d="M1.7 8.2L5 6.4l3 .4.7 1.7-1.2 2-3.4 2-2-1.3z" fill="#f4b74e"/><path d="M3 9.5l3.8-1.7" stroke="#895019" stroke-width="1.2"/><path d="M4.7 12.8l3.8-2.4" stroke="#a7631b"/>'],
['Laptop','#00669b','<path d="M2 15.3h11l3-2-2 2.6H4z" opacity=".25"/><path d="M4.2.4l11 .5-1.2 9.4-10.5-.8z" fill="#d6874b"/><path d="M5.3 1.5l8.7.5-1 7.1-8.6-.6z" fill="#4488c8"/><path d="M5.3 1.5l8.7.5-9.4 4z" fill="#98c6eb"/><path d="M3.4 9.6l10.7.8 1 2-2.7 2.3L.4 13.2v-1z" fill="#eca865"/><path d="M3.6 10.6l9 .7M2.4 11.8l9 .8" stroke="#fff1d5" stroke-dasharray="1.5 .5"/><path d="M.4 13.1l12 1.6 2.7-2.3" stroke="#b9622b" fill="none" stroke-width=".8"/>'],
['Leaf','#78b900','<path d="M3 15c5-.6 10-3 12-11l-.7 6c-2 4-5 5-9 5z" opacity=".2"/><path d="M1.9 12.4C-.1 5.2 6 1.5 15.4.8c.2 6.2-2.6 12-10.6 12z" fill="url(#g)"/><path d="M.6 15.4C3.8 10.8 8 6.4 14.4 1.6" stroke="#e1f2bf" stroke-width=".9" fill="none"/><path d="M4.4 10.8l-.2-4M6.8 8.1l.1-4.2M9.5 5.5l.3-3M5.8 9.6l4.7.8M8.5 6.8l4.3.3" stroke="#b8d88b" stroke-width=".6"/>'],
['Lightning[1]','#69a9d7','<path d="M8 15l4-4 2-2.6" stroke="#000" opacity=".15"/><path d="M8.1 1L4.5 6.6l3.2 1.7-1.5 6.8 6.4-7-3.5-1.8z" fill="url(#y)"/><path d="M8 1.7L5.2 6.4l3.6 1.7-1.3 4" stroke="#fff0b5" stroke-width=".7" fill="none"/><path d="M12.4 8l-6 6.7" stroke="#d98b2a" stroke-width=".7"/>']
];

const selected = 'Bell';
document.getElementById('styles').innerHTML = styles.map(([name, color, icon]) => `
  <li>
    <button type="button" aria-pressed="${name === selected}" class="flex h-5 w-full items-stretch border bg-white text-left ${name === selected ? 'border-black' : 'border-[#dcdcdc]'}">
      <svg viewBox="0 0 16 16" class="mr-[6px] size-4 shrink-0" aria-hidden="true">${icon}</svg>
      <span class="grow text-center leading-[15px] text-white text-shadow-[0_0_1px_#fff]" style="background-color:${color}">${name}</span>
    </button>
  </li>`).join('');
</script>
</body>
</html>
